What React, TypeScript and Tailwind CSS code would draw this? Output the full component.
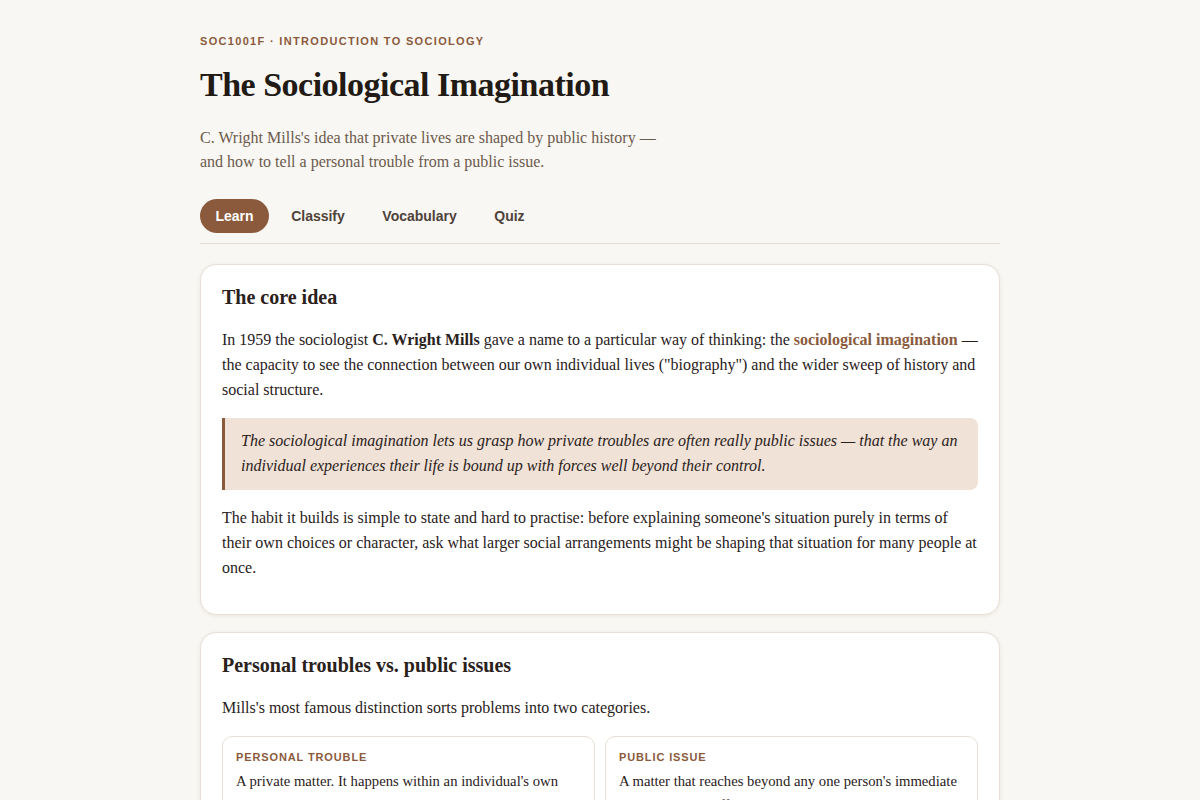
import React from "react";

const TABS = ["Learn", "Classify", "Vocabulary", "Quiz"];

export default function App() {
  const active = "Learn";
  return (
    <div className="min-h-screen bg-[#f9f7f3] font-['Liberation_Serif',serif] text-[#2a211b]">
      <div className="mx-auto w-[800px] pt-[33px] pb-10">
        <div className="font-['Liberation_Sans',sans-serif] text-[11px] font-bold uppercase tracking-[0.12em] text-[#8b5a3c]">
          SOC1001F · Introduction to Sociology
        </div>
        <h1 className="mt-[13px] text-[34px] font-bold leading-[44px] tracking-[-0.5px] text-[#221a14]">
          The Sociological Imagination
        </h1>
        <p className="mt-[19px] max-w-[480px] text-[16px] leading-[24px] text-[#6b5a4c]">
          C. Wright Mills's idea that private lives are shaped by public history — and how to tell a personal
          trouble from a public issue.
        </p>

        <nav className="mt-[25px] flex items-center gap-[6.5px] border-b border-[#e4dcd2] pb-[10px] font-['Liberation_Sans',sans-serif]">
          {TABS.map((t) => (
            <button
              key={t}
              type="button"
              className={[
                "h-[34px] rounded-full px-[15.5px] pt-[2px] text-[14px] font-bold",
                t === active ? "bg-[#8b5a3c] text-white" : "text-[#4e423a]",
              ].join(" ")}
            >
              {t}
            </button>
          ))}
        </nav>

        <section className="mt-[20px] rounded-[16px] border border-[#e8e0d5] bg-white px-[21px] pt-[21px] pb-[20px] shadow-[0_1px_4px_rgba(60,40,20,0.08)]">
          <h2 className="text-[20px] font-bold leading-[22px]">The core idea</h2>
          <p className="mt-[19px] text-[16px] leading-[25px]">
            In 1959 the sociologist <strong>C. Wright Mills</strong> gave a name to a particular way of thinking: the{" "}
            <strong className="text-[#8b5a3c]">sociological imagination</strong> — the capacity to see the connection
            between our own individual lives ("biography") and the wider sweep of history and social structure.
          </p>
          <blockquote className="mt-[16px] rounded-r-[8px] border-l-[3px] border-[#8b5a3c] bg-[#f0e2d6] pt-[10px] pb-[12px] pl-[16px] pr-[16px] text-[16px] italic leading-[25px]">
            The sociological imagination lets us grasp how private troubles are often really public issues — that the
            way an individual experiences their life is bound up with forces well beyond their control.
          </blockquote>
          <p className="mt-[15px] mb-[14px] text-[16px] leading-[25px]">
            The habit it builds is simple to state and hard to practise: before explaining someone's situation purely in
            terms of their own choices or character, ask what larger social arrangements might be shaping that situation
            for many people at once.
          </p>
        </section>

        <section className="mt-[17px] rounded-[16px] border border-[#e8e0d5] bg-white px-[21px] pt-[21px] pb-[20px] shadow-[0_1px_4px_rgba(60,40,20,0.08)]">
          <h2 className="text-[20px] font-bold leading-[22px]">Personal troubles vs. public issues</h2>
          <p className="mt-[19px] text-[16px] leading-[25px]">
            Mills's most famous distinction sorts problems into two categories.
          </p>
          <div className="mt-[16px] grid grid-cols-2 gap-[10px]">
            <div className="rounded-[10px] border border-[#e8e0d5] px-[13px] pt-[12px] pb-[14px]">
              <div className="font-['Liberation_Sans',sans-serif] text-[11px] font-bold uppercase tracking-[0.08em] text-[#8b5a3c]">
                Personal trouble
              </div>
              <p className="mt-[4px] text-[14.7px] leading-[24px]">
                A private matter. It happens within an individual's own character and their immediate relationships
                with others, and can be resolved by the person themselves.
              </p>
            </div>
            <div className="rounded-[10px] border border-[#e8e0d5] px-[13px] pt-[12px] pb-[14px]">
              <div className="font-['Liberation_Sans',sans-serif] text-[11px] font-bold uppercase tracking-[0.08em] text-[#8b5a3c]">
                Public issue
              </div>
              <p className="mt-[4px] text-[14.7px] leading-[24px]">
                A matter that reaches beyond any one person's immediate environment. It affects many people and is rooted
                in the structure and institutions of society.
              </p>
            </div>
          </div>
        </section>
      </div>
    </div>
  );
}
